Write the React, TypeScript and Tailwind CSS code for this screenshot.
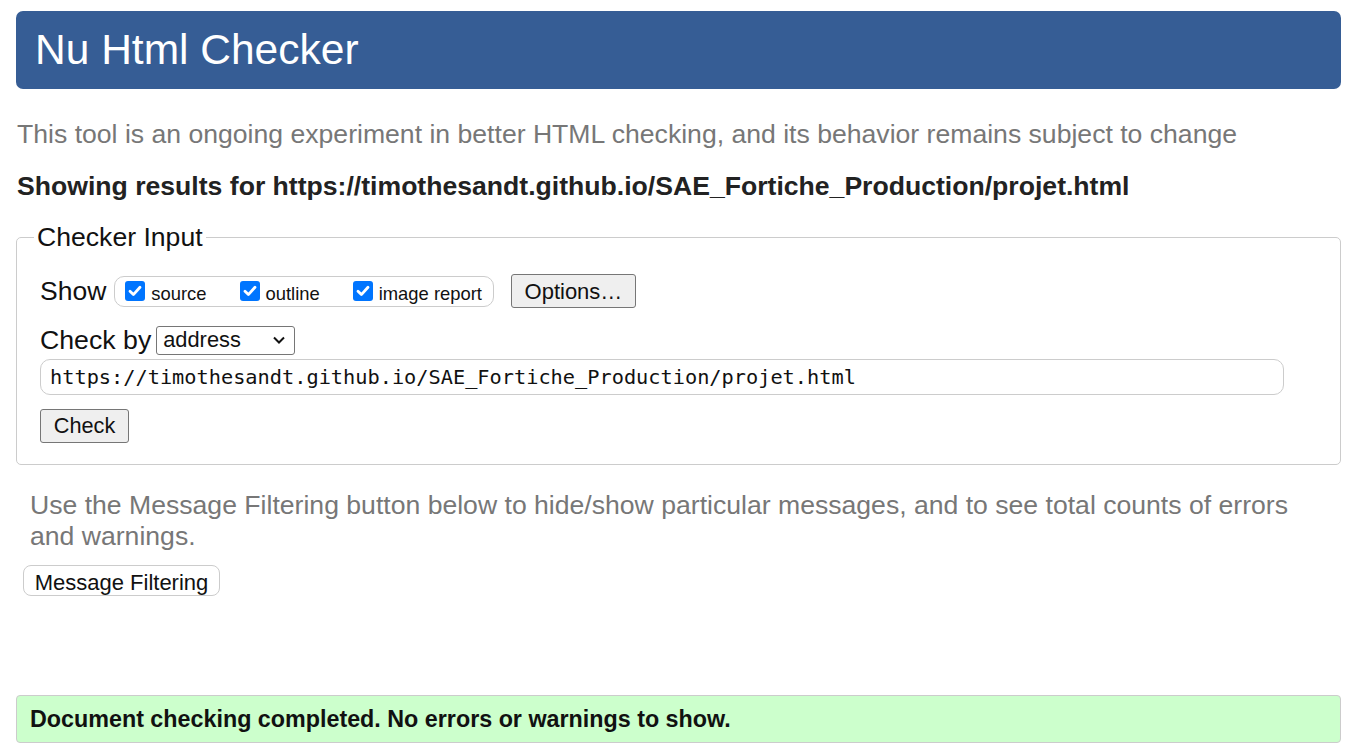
import React from 'react';

const Check: React.FC<{ label: string }> = ({ label }) => (
    <label className="flex items-center gap-[6px] mr-[33px] last:mr-0">
        <span className="w-[20px] h-[20px] rounded-[3px] bg-[#0075ff] flex items-center justify-center">
            <svg width="16" height="16" viewBox="0 0 16 16">
                <path d="M3 8.2 L6.4 11.6 L13 4.2" fill="none" stroke="#fff" strokeWidth="2.8" strokeLinecap="round" strokeLinejoin="round" />
            </svg>
        </span>
        <span className="text-[18.4px] text-[#111] mt-[6px]">{label}</span>
    </label>
);

const App: React.FC = () => {
    return (
        <div className="h-[756px] overflow-hidden bg-white pl-[16px] pr-[10px] pt-[11px] font-['Liberation_Sans',Arial,sans-serif] text-[#111]">
            <header className="h-[78px] bg-[#365d95] rounded-[7px] flex items-center pl-[19px]">
                <h1 className="text-white text-[42.5px] leading-none">Nu Html Checker</h1>
            </header>

            <p className="mt-[30px] ml-[1px] text-[26.6px] leading-[31px] text-[#777]">
                This tool is an ongoing experiment in better HTML checking, and its behavior remains subject to change
            </p>
            <p className="mt-[21px] ml-[1px] text-[26.6px] leading-[31px] font-bold text-[#222]">
                Showing results for https://timothesandt.github.io/SAE_Fortiche_Production/projet.html
            </p>

            {/* checker input */}
            <fieldset className="mt-[20px] border border-[#ccc] rounded-[5px] pl-[23px] pr-[56px] pb-[20px] h-[243px]">
                <legend className="text-[26.6px] leading-[31px] px-[3px] ml-[-6px] text-[#111]">Checker Input</legend>

                <div className="flex items-center mt-[21px]">
                    <span className="text-[26.5px] leading-[30px] mr-[8px]">Show</span>
                    <div className="h-[31px] border border-[#ccc] rounded-[10px] flex items-center pl-[10px] pr-[11px]">
                        <Check label="source" />
                        <Check label="outline" />
                        <Check label="image report" />
                    </div>
                    <button className="ml-[17px] h-[34px] w-[125px] bg-[#efefef] border border-[#767676] rounded-[3px] text-[22px] text-[#111]">
                        Options…
                    </button>
                </div>

                <div className="flex items-center mt-[17px]">
                    <span className="text-[26.7px] leading-[30px] mr-[5px]">Check by</span>
                    <div className="w-[139px] h-[29px] border border-[#767676] rounded-[3px] flex items-center justify-between pl-[6px] pr-[8px]">
                        <span className="text-[21.8px]">address</span>
                        <svg width="14" height="10" viewBox="0 0 14 10">
                            <path d="M2 2.5 L7 7.5 L12 2.5" fill="none" stroke="#111" strokeWidth="2" />
                        </svg>
                    </div>
                </div>

                <div className="mt-[4px] h-[36px] border border-[#ccc] rounded-[10px] flex items-center pl-[9px]">
                    <span className="font-['DejaVu_Sans_Mono',monospace] text-[20.3px] text-[#111]">
                        https://timothesandt.github.io/SAE_Fortiche_Production/projet.html
                    </span>
                </div>

                <button className="mt-[14px] h-[34px] w-[89px] bg-[#efefef] border border-[#767676] rounded-[3px] text-[21.7px] text-[#111]">
                    Check
                </button>
            </fieldset>

            <p className="mt-[25px] ml-[14px] mr-[40px] text-[26.6px] leading-[31px] text-[#777]">
                Use the Message Filtering button below to hide/show particular messages, and to see total counts of errors and warnings.
            </p>
            <button className="mt-[13px] ml-[7px] h-[31px] w-[197px] bg-white border border-[#ccc] rounded-[8px] text-[22px] text-[#111]">
                Message Filtering
            </button>

            <div className="mt-[98px] h-[48px] bg-[#ccffcc] border border-[#ccc] rounded-[4px] flex items-center pl-[13px]">
                <span className="text-[23.3px] font-bold text-[#111]">Document checking completed. No errors or warnings to show.</span>
            </div>
        </div>
    );
};

export default App;
